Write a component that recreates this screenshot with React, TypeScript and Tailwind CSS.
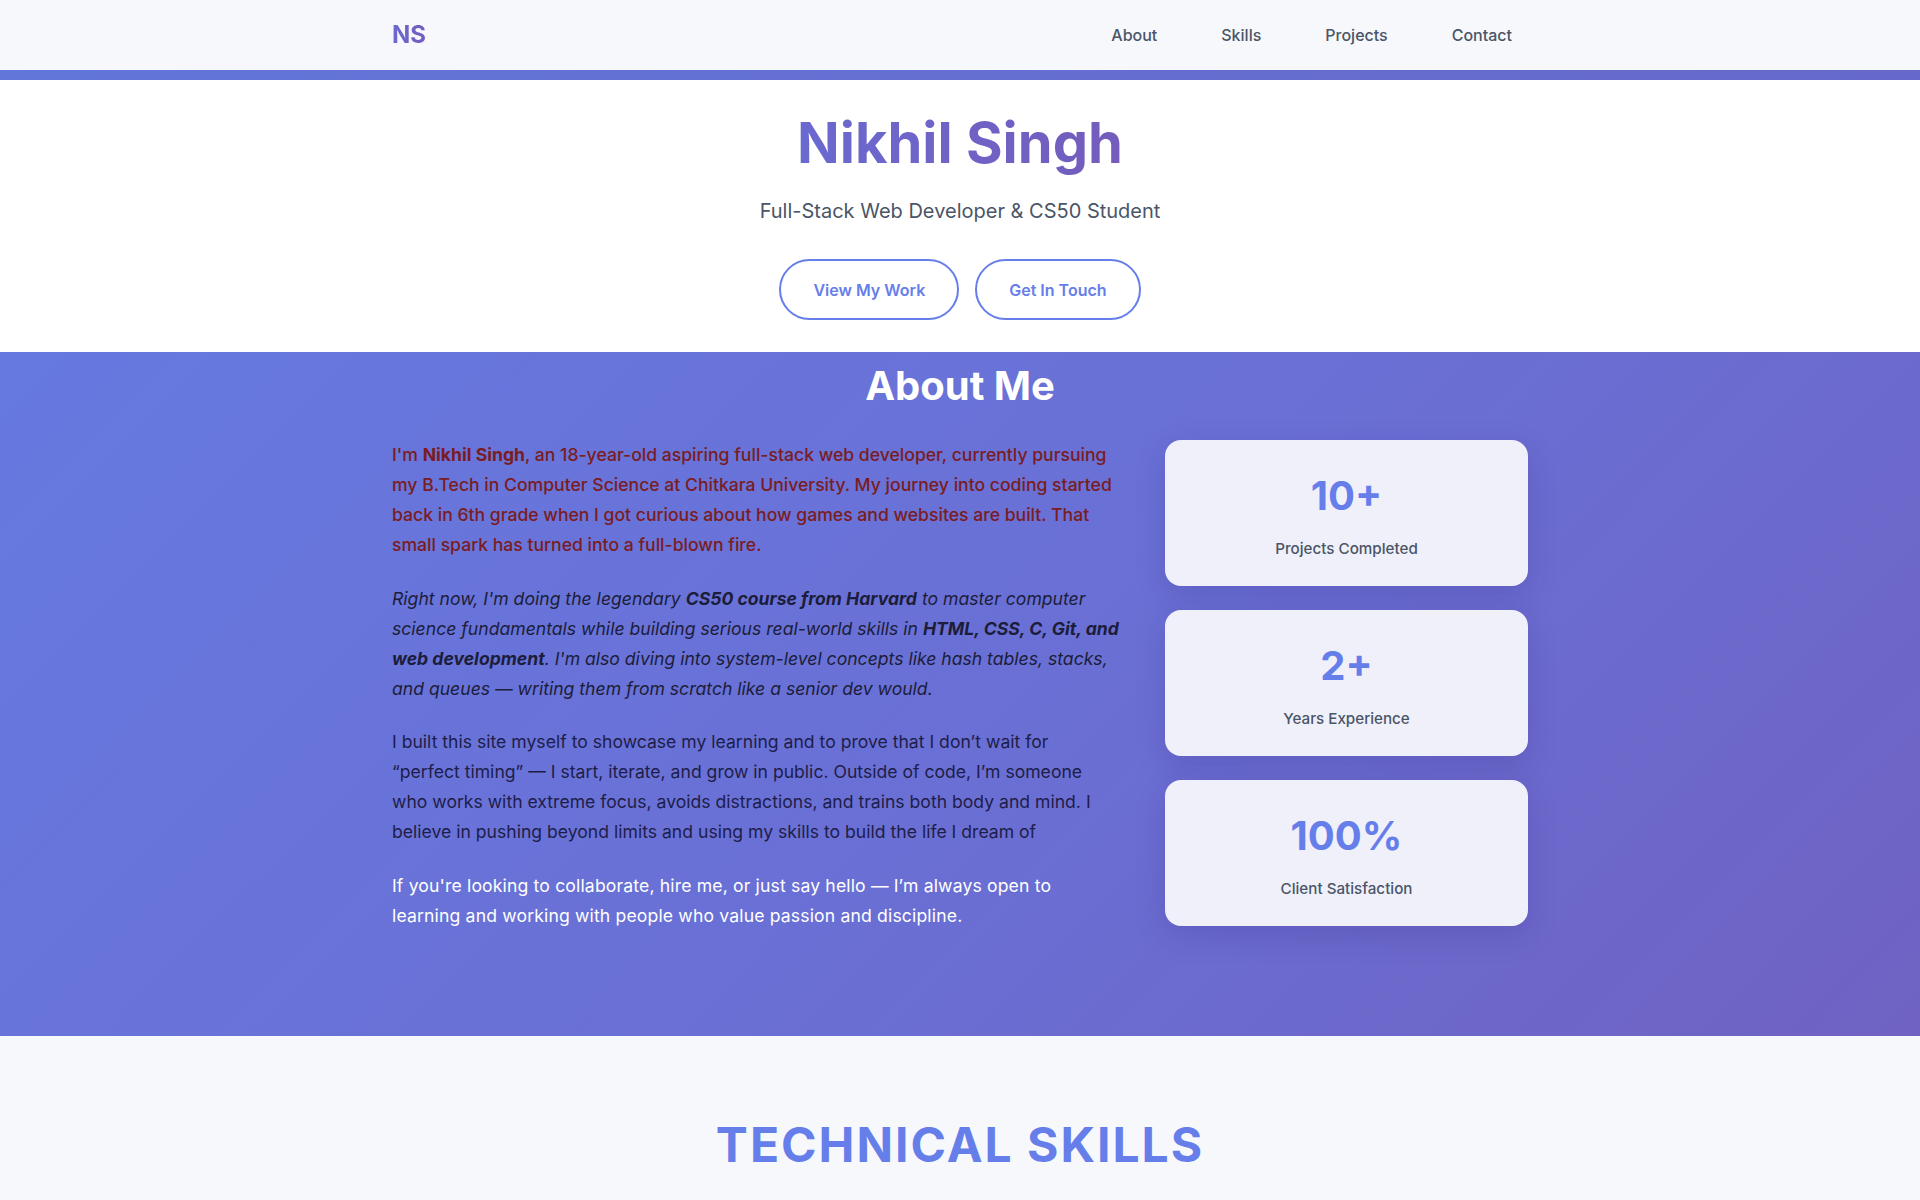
import React from "react";

const font = { fontFamily: "Inter, 'Noto Sans', sans-serif" };

function Stat({ value, label }: { value: string; label: string }) {
  return (
    <div className="rounded-2xl bg-[#f0f0fa] px-6 pt-8 pb-[25px] text-center shadow-[0_10px_30px_rgba(40,30,120,0.18)]">
      <div className="text-[40px] font-bold leading-[1.2] text-[#667eea]">{value}</div>
      <div className="mt-[18px] text-[15.2px] font-medium leading-[1.5] text-[#4a5568]">{label}</div>
    </div>
  );
}

export default function App() {
  return (
    <div style={font} className="min-h-screen bg-[#f7f8fc]">
      {/* Nav */}
      <nav className="bg-[#f7f8fc]">
        <div className="mx-auto flex h-[70px] max-w-[1200px] items-center justify-between px-8">
          <div className="bg-gradient-to-r from-[#6a69d0] to-[#745cbc] bg-clip-text text-2xl font-bold text-transparent">
            NS
          </div>
          <ul className="flex gap-8">
            {["About", "Skills", "Projects", "Contact"].map((l) => (
              <li key={l}>
                <a className="block px-4 text-base font-medium text-[#4a5568]">{l}</a>
              </li>
            ))}
          </ul>
        </div>
      </nav>
      <div className="h-[10px] bg-gradient-to-r from-[#6275d9] to-[#6669c9]" />

      {/* Hero */}
      <header className="bg-white pt-[30px] pb-8 text-center">
        <h1 className="inline-block bg-gradient-to-r from-[#6a69d0] to-[#745cbc] bg-clip-text text-[56px] font-bold leading-[1.2] text-transparent">
          Nikhil Singh
        </h1>
        <p className="mt-[19px] text-xl leading-[1.5] text-[#4a5568]">
          Full-Stack Web Developer &amp; CS50 Student
        </p>
        <div className="mt-[33px] flex justify-center gap-4">
          <a className="rounded-full border-2 border-[#667eea] px-8 py-[16.5px] text-base font-semibold leading-[1.5] text-[#667eea]">
            View My Work
          </a>
          <a className="rounded-full border-2 border-[#667eea] px-8 py-[16.5px] text-base font-semibold leading-[1.5] text-[#667eea]">
            Get In Touch
          </a>
        </div>
      </header>

      {/* About */}
      <section className="bg-[linear-gradient(135deg,#6679e0_0%,#6a6fd4_55%,#6f62c3_100%)] pt-[10px] pb-[105px]">
        <h2 className="mb-[30px] text-center text-[40px] font-bold leading-[1.2] text-white">About Me</h2>
        <div className="mx-auto grid max-w-[1200px] grid-cols-[728px_363px] gap-[45px] px-8">
          <div className="text-[17.6px] leading-[1.7]">
            <p className="font-medium text-[#7a1c22]">
              I'm <strong className="font-bold">Nikhil Singh</strong>, an 18-year-old aspiring full-stack web developer, currently pursuing my B.Tech in Computer Science at Chitkara University. My journey into coding started back in 6th grade when I got curious about how games and websites are built. That small spark has turned into a full-blown fire.
            </p>
            <p className="mt-6 italic text-[#1c1d3a]">
              Right now, I'm doing the legendary <strong className="font-bold">CS50 course from Harvard</strong> to master computer science fundamentals while building serious real-world skills in <strong className="font-bold">HTML, CSS, C, Git, and web development</strong>. I'm also diving into system-level concepts like hash tables, stacks, and queues — writing them from scratch like a senior dev would.
            </p>
            <p className="mt-6 text-[#1e1d4a]">
              I built this site myself to showcase my learning and to prove that I don’t wait for “perfect timing” — I start, iterate, and grow in public. Outside of code, I’m someone who works with extreme focus, avoids distractions, and trains both body and mind. I believe in pushing beyond limits and using my skills to build the life I dream of
            </p>
            <p className="mt-6 max-w-[700px] tracking-[0.15px] text-white">
              If you're looking to collaborate, hire me, or just say hello — I’m always open to learning and working with people who value passion and discipline.
            </p>
          </div>
          <div className="flex flex-col gap-6">
            <Stat value="10+" label="Projects Completed" />
            <Stat value="2+" label="Years Experience" />
            <Stat value="100%" label="Client Satisfaction" />
          </div>
        </div>
      </section>

      {/* Skills */}
      <section className="min-h-[400px] bg-[#f7f8fc] pt-20 text-center">
        <h2 className="text-5xl font-bold leading-[1.2] tracking-[2px] text-[#667eea]">TECHNICAL SKILLS</h2>
      </section>
    </div>
  );
}
